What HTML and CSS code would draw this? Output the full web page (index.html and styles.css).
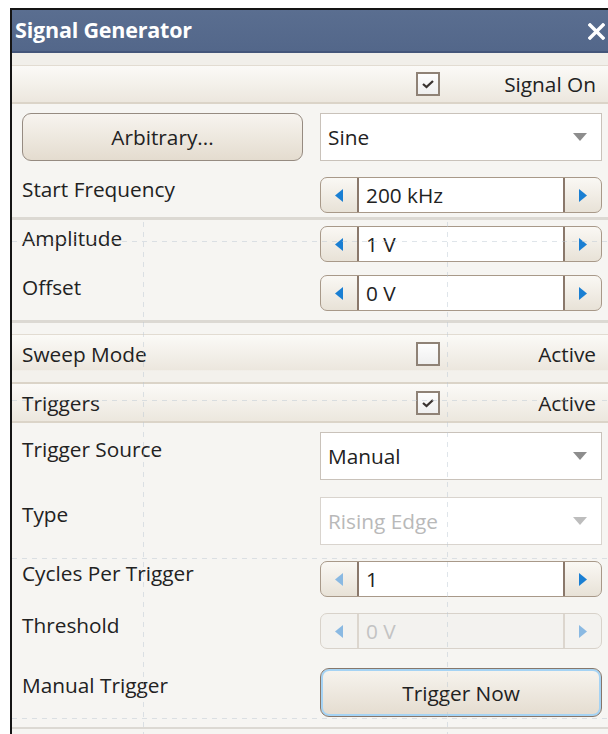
FILE: index.html
```html
<!DOCTYPE html>
<html lang="en">
<head>
<meta charset="utf-8">
<title>Signal Generator</title>
<link rel="stylesheet" href="styles.css">
</head>
<body>
<div class="window">
  <div class="titlebar">
    <span class="title">Signal Generator</span>
    <svg class="close" width="17" height="17" viewBox="0 0 17 17"><path d="M2 2 L15 15 M15 2 L2 15" stroke="#fff" stroke-width="3.4" stroke-linecap="square"/></svg>
  </div>

  <div class="panel">
    <div class="strip"></div>
    <div class="band band-signal">
      <span></span>
      <span class="check"><svg width="14" height="10" viewBox="0 0 14 10"><path d="M2 5 L5.5 8 L12 2" fill="none" stroke="#3a3330" stroke-width="2.3"/></svg></span>
      <span class="band-note">Signal On</span>
    </div>

    <div class="row row-wave">
      <div class="btn">Arbitrary...</div>
      <div class="combo"><span>Sine</span><svg class="drop" width="14" height="8" viewBox="0 0 14 8"><path d="M0 0 H14 L7 8 Z" fill="#8d8d8d"/></svg></div>
    </div>

    <div class="row row-spin row-freq">
      <div class="label">Start Frequency</div>
      <div class="spin">
        <span class="spin-btn"><svg width="8" height="13" viewBox="0 0 8 13"><path d="M8 0 V13 L0 6.5 Z" fill="#1a7fd3"/></svg></span>
        <span class="spin-field">200 kHz</span>
        <span class="spin-btn"><svg width="8" height="13" viewBox="0 0 8 13"><path d="M0 0 V13 L8 6.5 Z" fill="#1a7fd3"/></svg></span>
      </div>
    </div>

    <div class="sep sep-a"></div>

    <div class="row row-spin row-amp">
      <div class="label">Amplitude</div>
      <div class="spin">
        <span class="spin-btn"><svg width="8" height="13" viewBox="0 0 8 13"><path d="M8 0 V13 L0 6.5 Z" fill="#1a7fd3"/></svg></span>
        <span class="spin-field">1 V</span>
        <span class="spin-btn"><svg width="8" height="13" viewBox="0 0 8 13"><path d="M0 0 V13 L8 6.5 Z" fill="#1a7fd3"/></svg></span>
      </div>
    </div>

    <div class="row row-spin row-offset">
      <div class="label">Offset</div>
      <div class="spin">
        <span class="spin-btn"><svg width="8" height="13" viewBox="0 0 8 13"><path d="M8 0 V13 L0 6.5 Z" fill="#1a7fd3"/></svg></span>
        <span class="spin-field">0 V</span>
        <span class="spin-btn"><svg width="8" height="13" viewBox="0 0 8 13"><path d="M0 0 V13 L8 6.5 Z" fill="#1a7fd3"/></svg></span>
      </div>
    </div>

    <div class="sep sep-b"></div>

    <div class="band band-sweep">
      <span class="band-label">Sweep Mode</span>
      <span class="check"></span>
      <span class="band-note">Active</span>
    </div>

    <div class="band band-trig">
      <span class="band-label">Triggers</span>
      <span class="check"><svg width="14" height="10" viewBox="0 0 14 10"><path d="M2 5 L5.5 8 L12 2" fill="none" stroke="#3a3330" stroke-width="2.3"/></svg></span>
      <span class="band-note">Active</span>
    </div>

    <div class="row row-tall row-source">
      <div class="label">Trigger Source</div>
      <div class="combo"><span>Manual</span><svg class="drop" width="14" height="8" viewBox="0 0 14 8"><path d="M0 0 H14 L7 8 Z" fill="#8d8d8d"/></svg></div>
    </div>

    <div class="row row-tall row-type">
      <div class="label">Type</div>
      <div class="combo combo-off"><span>Rising Edge</span><svg class="drop" width="14" height="8" viewBox="0 0 14 8"><path d="M0 0 H14 L7 8 Z" fill="#bdbdbd"/></svg></div>
    </div>

    <div class="row row-spin row-cycles">
      <div class="label">Cycles Per Trigger</div>
      <div class="spin">
        <span class="spin-btn"><svg width="8" height="13" viewBox="0 0 8 13"><path d="M8 0 V13 L0 6.5 Z" fill="#8ab9e2"/></svg></span>
        <span class="spin-field">1</span>
        <span class="spin-btn"><svg width="8" height="13" viewBox="0 0 8 13"><path d="M0 0 V13 L8 6.5 Z" fill="#1a7fd3"/></svg></span>
      </div>
    </div>

    <div class="row row-spin row-thresh">
      <div class="label">Threshold</div>
      <div class="spin spin-off">
        <span class="spin-btn"><svg width="8" height="13" viewBox="0 0 8 13"><path d="M8 0 V13 L0 6.5 Z" fill="#8ab9e2"/></svg></span>
        <span class="spin-field">0 V</span>
        <span class="spin-btn"><svg width="8" height="13" viewBox="0 0 8 13"><path d="M0 0 V13 L8 6.5 Z" fill="#8ab9e2"/></svg></span>
      </div>
    </div>

    <div class="row row-tall row-manual">
      <div class="label">Manual Trigger</div>
      <div class="btn btn-focus">Trigger Now</div>
    </div>

    <div class="sep sep-c"></div>
  </div>

  <!-- layout guide lines drawn on top of the form -->
  <svg class="guides" width="596" height="724" viewBox="0 0 596 724">
    <g stroke="#b9c6d2" stroke-width="1" stroke-dasharray="5 5" opacity="0.45">
      <path d="M131.5 212 V724"/>
      <path d="M435.5 212 V724"/>
      <path d="M0 231.5 H596"/>
      <path d="M0 390.5 H596"/>
      <path d="M0 548.5 H596"/>
      <path d="M0 708.5 H596"/>
    </g>
  </svg>
</div>
</body>
</html>
```

FILE: styles.css
```css
* {
  box-sizing: border-box;
}

html,
body {
  margin: 0;
  padding: 0;
  background: #ffffff;
}

body {
  font-family: "Open Sans", "Noto Sans", sans-serif;
  font-size: 20.8px;
  line-height: 28px;
  color: #222222;
}

/* window frame */
.window {
  position: relative;
  margin: 8px 0 0 10px;
  height: 726px;
  border-top: 2px solid #151515;
  border-left: 2px solid #151515;
  background: #f6f5f2;
  display: flex;
  flex-direction: column;
  overflow: hidden;
}

.titlebar {
  flex: none;
  height: 43px;
  padding: 0 3px 0 3px;
  background: linear-gradient(#5a6e90, #53678a);
  border-bottom: 2px solid #44567a;
  display: flex;
  align-items: center;
  justify-content: space-between;
}

.title {
  color: #ffffff;
  font-weight: 700;
  font-size: 21.5px;
  letter-spacing: -0.2px;
  margin-top: -1px;
}

.close {
  margin-top: 1px;
}

.panel {
  flex: 1;
  display: flex;
  flex-direction: column;
}

.strip {
  height: 12px;
  background: #f1efea;
}

/* section header bands */
.band {
  display: grid;
  grid-template-columns: 1fr 24px 156px;
  align-items: center;
  padding: 0 12px 0 10px;
  background: linear-gradient(#fbfaf7, #ece7de);
  border-top: 1px solid #e2dcd2;
  border-bottom: 2px solid #dbd4c8;
}

.band-signal {
  height: 39px;
}

.band-sweep {
  margin-top: 11px;
  height: 50px;
  padding-bottom: 10px;
  background: linear-gradient(#fbfaf7, #ece7de 74%, #f3f1ec 76%);
}

.band-trig {
  height: 39px;
  border-top: 0;
}

.band-note {
  text-align: right;
}

.check {
  width: 24px;
  height: 24px;
  border: 2px solid #8f8276;
  background: linear-gradient(#fdfdfd, #efefef);
  display: grid;
  place-items: center;
}

/* form rows */
.row {
  display: grid;
  grid-template-columns: 281px 282px;
  column-gap: 17px;
  padding-left: 10px;
  align-items: start;
}

.row-spin .label {
  margin-top: -2px;
}

.row-tall .label {
  padding-top: 3px;
}

.row-wave {
  margin-top: 9px;
}

.row-freq {
  margin-top: 16px;
}

.row-amp {
  margin-top: 6px;
}

.row-offset {
  margin-top: 13px;
}

.row-source {
  margin-top: 9px;
}

.row-type {
  margin-top: 17px;
}

.row-cycles {
  margin-top: 16px;
}

.row-thresh {
  margin-top: 16px;
}

.row-manual {
  margin-top: 19px;
}

.sep {
  height: 3px;
  background: #dcd9d3;
}

.sep-a {
  margin-top: 4px;
}

.sep-b {
  margin-top: 9px;
}

.sep-c {
  margin-top: 10px;
  height: 2px;
}

/* push buttons */
.btn {
  height: 48px;
  border: 1.5px solid #968b81;
  border-radius: 9px;
  background: linear-gradient(#f7f4ef, #e4dccf);
  display: grid;
  place-items: center;
}

.btn-focus {
  height: 49px;
  border-color: #86776b;
  box-shadow: inset 0 0 0 2px #a5d3f4;
}

/* drop-down boxes */
.combo {
  height: 48px;
  background: #ffffff;
  border: 1.5px solid #c9c2ba;
  display: flex;
  align-items: center;
  justify-content: space-between;
  padding: 0 14px 0 7px;
}

.combo-off {
  color: #b9b9b9;
  border-color: #d9d4ce;
}

/* spin boxes */
.spin {
  height: 36px;
  display: flex;
  border: 1.5px solid #a89989;
  border-radius: 7px;
  overflow: hidden;
  background: linear-gradient(#faf8f4, #e8e2d7);
}

.spin-btn {
  width: 36px;
  flex: none;
  display: grid;
  place-items: center;
}

.spin-field {
  flex: 1;
  background: #ffffff;
  border-left: 2px solid #8a786b;
  border-right: 2px solid #8a786b;
  padding-left: 7px;
  display: flex;
  align-items: center;
}

.spin-off {
  border-color: #d8d2ca;
  background: #f3f2ef;
}

.spin-off .spin-field {
  background: #f3f2ef;
  border-color: #dcd6ce;
  color: #c3c3c3;
}

/* guide overlay */
.guides {
  position: absolute;
  left: 0;
  top: 0;
  pointer-events: none;
}
```
